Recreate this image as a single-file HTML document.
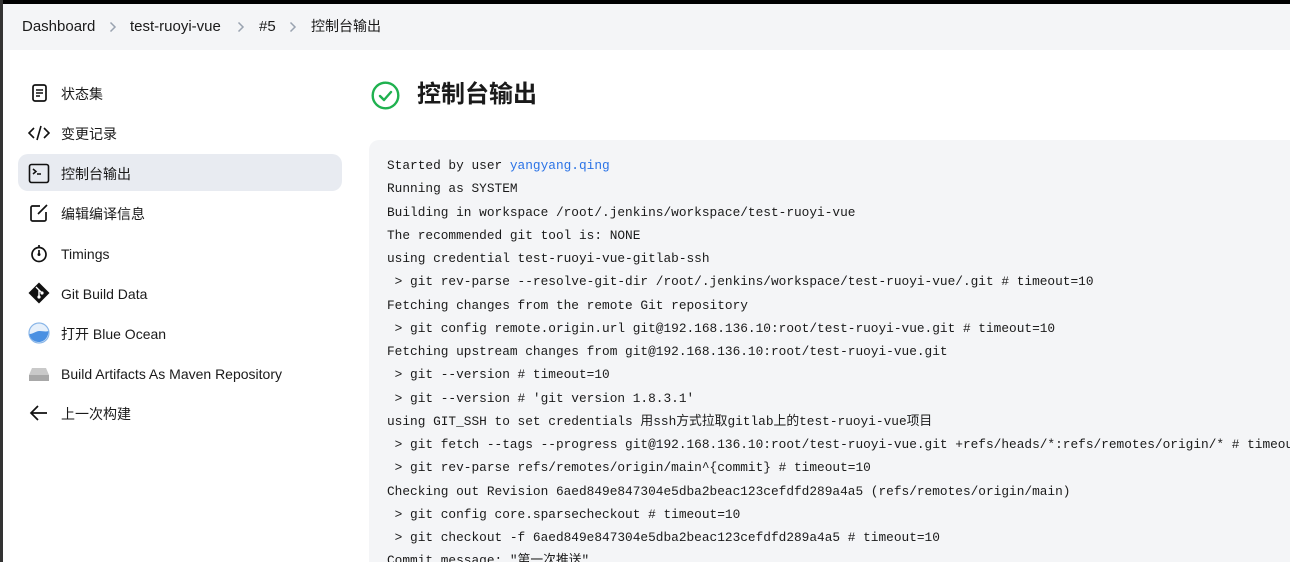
<!DOCTYPE html>
<html><head><meta charset="utf-8"><style>
*{margin:0;padding:0;box-sizing:border-box}
html,body{width:1290px;height:562px;overflow:hidden}
body{background:#fff;font-family:"Liberation Sans","Noto Sans CJK SC",sans-serif;color:#1a1a1a;position:relative}
.topbar{position:absolute;left:0;top:0;width:1290px;height:4px;background:#000}
.leftbar{position:absolute;left:0;top:0;width:3px;height:562px;background:#333}
.bc{position:absolute;left:3px;top:4px;width:1287px;height:46px;background:#f4f5f7;font-size:15px}
.bc span{position:absolute;top:14px;line-height:18px}
.bc svg{position:absolute;top:17px}
.side{position:absolute;left:18px;top:74px;width:324px}
.item{height:37px;margin-bottom:3px;font-size:14px;border-radius:10px;position:relative;line-height:18px}
.item.act{background:#e8ebf1}
.item .ic{position:absolute;left:10px;top:8px;width:22px;height:22px}
.item .t{position:absolute;left:43px;top:11px;line-height:18px;height:18px}
h1{position:absolute;left:417px;top:78px;font-size:24px;line-height:34px;font-weight:bold}
.con{position:absolute;left:369px;top:140px;width:940px;height:440px;background:#f4f5f7;border-radius:10px;padding:14px 0 0 18px;font-family:"Liberation Mono","Noto Sans CJK SC",monospace;font-size:12.8px;line-height:23.25px;white-space:pre;color:#1a1a1a}
.con a{color:#2b73e6;text-decoration:none}
</style></head><body>
<div class="topbar"></div><div class="leftbar"></div>
<div class="bc">
<span style="left:19px">Dashboard</span>
<svg style="left:106px" width="8" height="12" viewBox="0 0 8 12"><path d="M1.5 1.5l4.5 4.5-4.5 4.5" fill="none" stroke="#9aa3b0" stroke-width="1.5"/></svg>
<span style="left:127px">test-ruoyi-vue</span>
<svg style="left:234px" width="8" height="12" viewBox="0 0 8 12"><path d="M1.5 1.5l4.5 4.5-4.5 4.5" fill="none" stroke="#9aa3b0" stroke-width="1.5"/></svg>
<span style="left:256px">#5</span>
<svg style="left:286px" width="8" height="12" viewBox="0 0 8 12"><path d="M1.5 1.5l4.5 4.5-4.5 4.5" fill="none" stroke="#9aa3b0" stroke-width="1.5"/></svg>
<span style="left:308px;font-size:14px;top:13px">控制台输出</span>
</div>
<div class="side">
<div class="item"><svg class="ic" viewBox="0 0 22 22"><rect x="5" y="3" width="13" height="16" rx="2" fill="none" stroke="#111" stroke-width="1.7"/><path d="M8 8h7M8 11h7M8 14h4" stroke="#111" stroke-width="1.5"/></svg><span class="t">状态集</span></div>
<div class="item"><svg class="ic" viewBox="0 0 22 22"><path d="M6 6l-5 5 5 5M16 6l5 5-5 5M13 4l-4 14" fill="none" stroke="#111" stroke-width="1.6"/></svg><span class="t">变更记录</span></div>
<div class="item act"><svg class="ic" viewBox="0 0 22 22"><rect x="1.5" y="2.5" width="19" height="18" rx="2" fill="none" stroke="#111" stroke-width="1.6"/><path d="M5 7l3 2.5-3 2.5M9 12h4" fill="none" stroke="#111" stroke-width="1.5"/></svg><span class="t">控制台输出</span></div>
<div class="item"><svg class="ic" viewBox="0 0 22 22"><path d="M12 4H4.5a1.5 1.5 0 0 0-1.5 1.5v12a1.5 1.5 0 0 0 1.5 1.5h12a1.5 1.5 0 0 0 1.5-1.5V10M10 12l9-9" fill="none" stroke="#111" stroke-width="1.7"/></svg><span class="t">编辑编译信息</span></div>
<div class="item"><svg class="ic" viewBox="0 0 22 22"><circle cx="11" cy="12.5" r="7" fill="none" stroke="#111" stroke-width="1.7"/><path d="M11 3v3M11 12.5V8" stroke="#111" stroke-width="1.7"/><circle cx="11" cy="12.5" r="1.5" fill="#111"/></svg><span class="t">Timings</span></div>
<div class="item"><svg class="ic" viewBox="0 0 22 22"><path d="M11 0.5L21.5 11 11 21.5 0.5 11z" fill="#111"/><path d="M8 5l3 3v7M11 8l3 3" stroke="#fff" stroke-width="1.4" fill="none"/><circle cx="11" cy="15" r="1.6" fill="#fff"/><circle cx="14" cy="11" r="1.6" fill="#fff"/></svg><span class="t">Git Build Data</span></div>
<div class="item"><svg class="ic" viewBox="0 0 22 22"><circle cx="11" cy="11" r="10" fill="#e6f0fb" stroke="#8ab6e8" stroke-width="1.2"/><path d="M1.5 12c4 0 6-3 10-3s6 1 9 0c0 6-4 11-9.5 11S1.5 16 1.5 12z" fill="#4a90e2"/></svg><span class="t">打开 Blue Ocean</span></div>
<div class="item"><svg class="ic" viewBox="0 0 22 22"><path d="M4 6h14l3 7v6H1v-6z" fill="#c9c9c9"/><rect x="1" y="13" width="20" height="6" fill="#a8a8a8"/></svg><span class="t">Build Artifacts As Maven Repository</span></div>
<div class="item"><svg class="ic" viewBox="0 0 22 22"><path d="M19 11H4M10 4l-7 7 7 7" fill="none" stroke="#111" stroke-width="1.7"/></svg><span class="t">上一次构建</span></div>
</div>
<svg style="position:absolute;left:371px;top:81px" width="29" height="29" viewBox="0 0 29 29"><circle cx="14.5" cy="14.5" r="12.8" fill="none" stroke="#1fb14f" stroke-width="2.4"/><path d="M9 15l4 4 7-8" fill="none" stroke="#1fb14f" stroke-width="2.4" stroke-linecap="round" stroke-linejoin="round"/></svg>
<h1>控制台输出</h1>
<div class="con">Started by user <a>yangyang.qing</a>
Running as SYSTEM
Building in workspace /root/.jenkins/workspace/test-ruoyi-vue
The recommended git tool is: NONE
using credential test-ruoyi-vue-gitlab-ssh
 &gt; git rev-parse --resolve-git-dir /root/.jenkins/workspace/test-ruoyi-vue/.git # timeout=10
Fetching changes from the remote Git repository
 &gt; git config remote.origin.url git@192.168.136.10:root/test-ruoyi-vue.git # timeout=10
Fetching upstream changes from git@192.168.136.10:root/test-ruoyi-vue.git
 &gt; git --version # timeout=10
 &gt; git --version # 'git version 1.8.3.1'
using GIT_SSH to set credentials 用ssh方式拉取gitlab上的test-ruoyi-vue项目
 &gt; git fetch --tags --progress git@192.168.136.10:root/test-ruoyi-vue.git +refs/heads/*:refs/remotes/origin/* # timeout=10
 &gt; git rev-parse refs/remotes/origin/main^{commit} # timeout=10
Checking out Revision 6aed849e847304e5dba2beac123cefdfd289a4a5 (refs/remotes/origin/main)
 &gt; git config core.sparsecheckout # timeout=10
 &gt; git checkout -f 6aed849e847304e5dba2beac123cefdfd289a4a5 # timeout=10
Commit message: "第一次推送"</div>
</body></html>
